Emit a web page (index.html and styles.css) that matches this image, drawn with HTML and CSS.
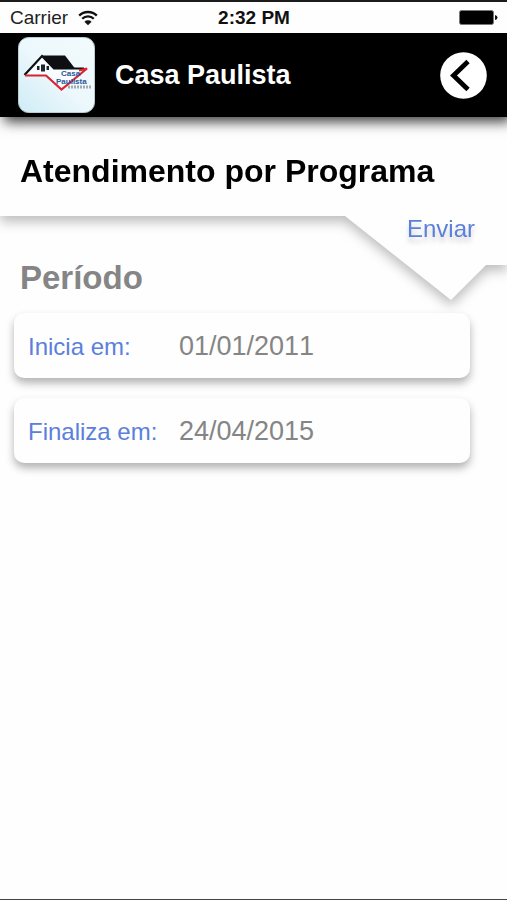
FILE: index.html
```html
<!DOCTYPE html>
<html lang="pt-BR">
<head>
<meta charset="utf-8">
<meta name="viewport" content="width=device-width, initial-scale=1">
<title>Casa Paulista</title>
<link rel="stylesheet" href="styles.css">
</head>
<body>
<div class="status">
  <div class="carrier">
    <span>Carrier</span>
    <svg class="wifi" viewBox="0 0 20 16" aria-hidden="true">
      <path d="M1.2 5.6a12.5 12.5 0 0 1 17.6 0M4.2 8.8a8.2 8.2 0 0 1 11.6 0" fill="none" stroke="#111" stroke-width="2.3"/>
      <path d="M10 15.2 6.4 11.7a5.1 5.1 0 0 1 7.2 0z" fill="#111"/>
    </svg>
  </div>
  <time class="clock">2:32 PM</time>
  <svg class="battery" viewBox="0 0 39 16" aria-hidden="true">
    <rect x="0.5" y="0.5" width="34" height="14" rx="2" fill="#000" stroke="#777"/>
    <path d="M36 5q2.500 .5 2.500 2.500t-2.500 2.500z" fill="#111"/>
  </svg>
</div>
<header class="bar">
  <svg class="logo" viewBox="0 0 77 76" role="img" aria-label="Casa Paulista">
    <defs>
      <linearGradient id="sky" x1="1" y1="0" x2="0" y2="1">
        <stop offset="0" stop-color="#f2fbfd"/>
        <stop offset=".5" stop-color="#edf8fc"/>
        <stop offset="1" stop-color="#cfecf6"/>
      </linearGradient>
    </defs>
    <rect x="0.5" y="0.5" width="76" height="75" rx="10" fill="url(#sky)" stroke="#b9cdd4"/>
    <path d="M8 37 24 20 37 32 68 32 43 51 28 38z" fill="#f8fdff"/>
    <path d="M24 18.500H47L57 31.500H36z" fill="#0d0f12"/>
    <path d="M6.500 38 24 19 36 31.500H66" fill="none" stroke="#0d0f12" stroke-width="2.200"/>
    <path d="M7 38.500H28L43.500 52.500 69 31.500 61 33.500" fill="none" stroke="#dc2431" stroke-width="2.200"/>
    <path d="M23 27.500h4v7h-4zM19 29h2.500v4H19zM28.500 29H31v4h-2.500z" fill="#20242b"/>
    <path d="M50 50H73" stroke="#a3abb2" stroke-width="3" stroke-dasharray="2 1"/>
    <text class="logo-name" x="43" y="39">Casa</text>
    <text class="logo-name" x="38" y="47">Paulista</text>
  </svg>
  <span class="brand">Casa Paulista</span>
  <button class="back" type="button" aria-label="Voltar">
    <svg viewBox="0 0 47 47" aria-hidden="true">
      <circle cx="23.5" cy="23.5" r="23.300" fill="#fff"/>
      <path d="M28 9.500 13.500 23.500 28 37.500" fill="none" stroke="#000" stroke-width="4.800"/>
    </svg>
  </button>
</header>
<main>
  <form>
    <div class="panel-shadow">
      <div class="panel">
        <h1>Atendimento por Programa</h1>
        <button class="send" type="submit">Enviar</button>
      </div>
    </div>
    <section class="period">
      <h2>Período</h2>
      <div class="field">
        <label for="start">Inicia em:</label>
        <input id="start" type="text" value="01/01/2011">
      </div>
      <div class="field">
        <label for="end">Finaliza em:</label>
        <input id="end" type="text" value="24/04/2015">
      </div>
    </section>
  </form>
</main>
</body>
</html>
```

FILE: styles.css
```css
* {
  box-sizing: border-box;
}

body {
  margin: 0;
  min-height: 100vh;
  border-top: 2px solid #1c1c1c;
  border-bottom: 1px solid #444;
  background: #fefefe;
  font-family: "Liberation Sans", Arial, sans-serif;
}

button,
input {
  margin: 0;
  padding: 0;
  border: 0;
  background: none;
  font-family: inherit;
}

.status {
  position: relative;
  z-index: 3;
  display: grid;
  grid-template-columns: 1fr auto 1fr;
  align-items: center;
  height: 31px;
  padding: 0 9px 0 10px;
  background: #fefefe;
  color: #222;
  font-size: 19px;
}

.carrier {
  display: flex;
  align-items: center;
  gap: 10px;
}

.wifi {
  width: 20px;
  height: 16px;
}

.clock {
  color: #111;
  font-weight: 700;
}

.battery {
  justify-self: end;
  width: 39px;
  height: 16px;
}

.bar {
  position: relative;
  z-index: 2;
  display: flex;
  align-items: center;
  height: 84px;
  padding: 0 20px 0 18px;
  background: #000;
  box-shadow: 4px 5px 12px rgba(0, 0, 0, 0.75);
}

.logo {
  width: 77px;
  height: 76px;
}

.logo-name {
  fill: #2b5597;
  font-size: 8px;
  font-weight: 700;
}

.brand {
  flex: 1;
  margin-left: 20px;
  color: #fff;
  font-size: 27px;
  font-weight: 700;
}

.back {
  width: 47px;
  height: 47px;
}

.back svg {
  display: block;
}

.panel-shadow {
  filter: drop-shadow(0 6px 6px rgba(0, 0, 0, 0.25));
}

.panel {
  display: flex;
  flex-direction: column;
  padding: 34px 20px 57px;
  background: #fefefe;
  clip-path: polygon(0 0, 100% 0, 100% calc(100% - 35px), calc(100% - 21px) calc(100% - 35px), calc(100% - 56px) 100%, calc(100% - 162px) calc(100% - 84px), 0 calc(100% - 84px));
}

h1 {
  margin: 0;
  color: #000;
  font-size: 32px;
  line-height: 40px;
}

.send {
  align-self: flex-end;
  margin: 24px 12px 0 0;
  color: #5b80dc;
  font-size: 24px;
  line-height: 28px;
  text-shadow: 0 5px 5px rgba(0, 0, 0, 0.18);
}

.period {
  position: relative;
  margin: -42px 37px 0 14px;
}

h2 {
  margin: 0 0 15px 6px;
  color: #858585;
  font-size: 33px;
  line-height: 40px;
}

.field {
  display: flex;
  align-items: center;
  height: 65px;
  padding: 2px 14px 0;
  border-radius: 10px;
  background: #fefefe;
  box-shadow: 0 5px 8px rgba(0, 0, 0, 0.3);
}

.field + .field {
  margin-top: 20px;
}

label {
  flex: none;
  width: 151px;
  color: #5b80dc;
  font-size: 24px;
}

input {
  flex: 1;
  min-width: 0;
  color: #858585;
  font-size: 27px;
  font-kerning: none;
}
```
